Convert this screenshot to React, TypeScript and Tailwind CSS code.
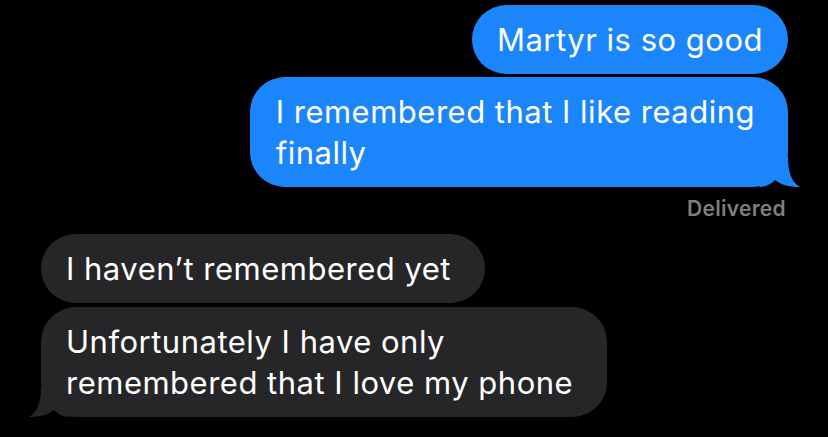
const font = { fontFamily: "Inter, 'Noto Sans', sans-serif" };

const Tail = ({ color, side }: { color: string; side: "left" | "right" }) => (
  <svg
    width="40"
    height="30"
    viewBox="0 0 40 30"
    className={
      side === "right"
        ? "absolute bottom-0 right-[-12px]"
        : "absolute bottom-0 left-[-12px] -scale-x-100"
    }
  >
    <path
      d="M0 0 L28 0 C28 14 31 25 40 30 C30 30 21 28 15 23 C11 27 6 30 0 30 Z"
      fill={color}
    />
  </svg>
);

const Bubble = ({
  children,
  me,
  tail,
  wide,
}: {
  children: React.ReactNode;
  me?: boolean;
  tail?: boolean;
  wide?: boolean;
}) => (
  <div
    className={[
      "relative rounded-[35px] py-[14px] text-[31px] leading-[41px] tracking-[0.5px] text-white",
      me ? "bg-[#1b86fc]" : "bg-[#262629]",
      wide ? (me ? "pl-[26px] pr-[33px]" : "pl-[25px] pr-[34px]") : "px-[25px]",
    ].join(" ")}
  >
    <span className="relative z-10">{children}</span>
    {tail && <Tail color={me ? "#1b86fc" : "#262629"} side={me ? "right" : "left"} />}
  </div>
);

export default function App() {
  return (
    <div className="w-[828px] h-[437px] bg-black overflow-hidden" style={font}>
      <div className="flex flex-col items-end pr-[40px] pt-[5px] gap-[3px]">
        <Bubble me>Martyr is so good</Bubble>
        <Bubble me tail wide>
          I remembered that I like reading
          <br />
          finally
        </Bubble>
      </div>
      <div className="flex justify-end pr-[42px] pt-[10px]">
        <span className="text-[21px] leading-[24px] font-semibold tracking-[0.3px] text-[#7d7d82]">
          Delivered
        </span>
      </div>
      <div className="flex flex-col items-start pl-[41px] pt-[13px] gap-[4px]">
        <Bubble wide>I haven’t remembered yet</Bubble>
        <Bubble tail wide>
          Unfortunately I have only
          <br />
          remembered that I love my phone
        </Bubble>
      </div>
    </div>
  );
}
